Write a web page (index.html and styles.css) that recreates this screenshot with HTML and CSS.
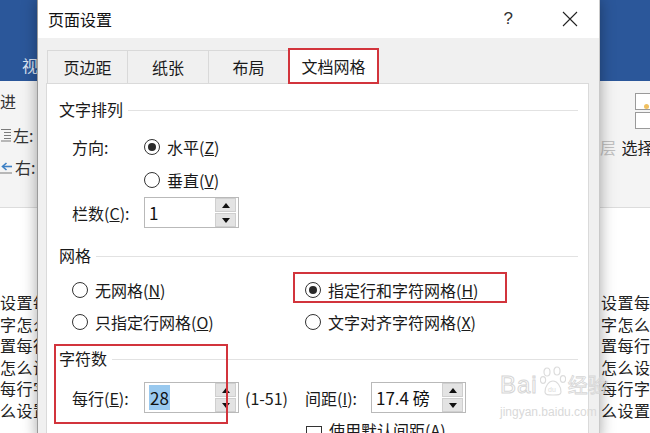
FILE: index.html
```html
<!DOCTYPE html>
<html lang="zh-CN">
<head>
<meta charset="utf-8">
<title>页面设置</title>
<link rel="stylesheet" href="styles.css">
</head>
<body>
<div class="app">
  <div class="app-tabs">
    <span class="app-tab">视图</span>
  </div>
  <div class="app-ribbon">
    <div class="rib-left">
      <div class="rib-row r1"><span class="indent-title">缩进</span></div>
      <div class="rib-row r2">
        <svg class="rib-icon" width="11" height="14" viewBox="0 0 11 14"><path d="M1 1.5h10M4 4.5h7M4 7.5h7M4 10.5h7M1 13h10" stroke="#7a7a7a" stroke-width="1"/></svg>
        <span>左:</span>
      </div>
      <div class="rib-row r3">
        <svg class="rib-icon" width="13" height="14" viewBox="0 0 13 14"><path d="M0 13h12" stroke="#7a7a7a" stroke-width="1"/><path d="M3 6.5h9" stroke="#3c7fc4" stroke-width="1.6"/><path d="M6.5 3L2.5 6.5 6.5 10" fill="none" stroke="#3c7fc4" stroke-width="1.6"/></svg>
        <span>右:</span>
      </div>
    </div>
    <div class="rib-right">
      <div class="rbox rbox1"><span class="rdot"></span></div>
      <div class="rbox rbox2"></div>
      <div class="rib-text"><span class="faded">层</span> 选择</div>
    </div>
  </div>
  <div class="doc">
    <div class="doc-col doc-left">
      <div>设置每行字</div>
      <div>字怎么设置</div>
      <div>置每行字数</div>
      <div>怎么设置每</div>
      <div>每行字数怎</div>
      <div>么设置每行</div>
    </div>
    <div class="doc-col doc-right">
      <div>设置每行</div>
      <div>字怎么设</div>
      <div>置每行字</div>
      <div>怎么设置</div>
      <div>每行字数</div>
      <div>么设置每</div>
    </div>
  </div>
</div>

<div class="dialog">
  <div class="dlg-title">
    <span class="dlg-name">页面设置</span>
    <span class="dlg-help">?</span>
    <svg class="dlg-close" width="16" height="16" viewBox="0 0 16 16"><path d="M1 1L15 15M15 1L1 15" stroke="#222" stroke-width="1.1"/></svg>
  </div>
  <div class="dlg-tabs">
    <div class="dtab">页边距</div>
    <div class="dtab wide">纸张</div>
    <div class="dtab">布局</div>
    <div class="dtab active">文档网格</div>
  </div>
  <div class="panel">
    <div class="group-head h1"><span>文字排列</span><i class="rule"></i></div>
    <div class="frow row-dir">
      <span class="flabel">方向:</span>
      <span class="radio on"></span><span class="rtext">水平(<u>Z</u>)</span>
    </div>
    <div class="frow row-vert">
      <span class="radio"></span><span class="rtext">垂直(<u>V</u>)</span>
    </div>
    <div class="frow row-cols">
      <span class="flabel">栏数(<u>C</u>):</span>
      <div class="spin"><span class="val">1</span><span class="btns"><span class="btn"><i class="up"></i></span><span class="btn"><i class="down"></i></span></span></div>
    </div>

    <div class="group-head h2"><span>网格</span><i class="rule"></i></div>
    <div class="grid-rows">
      <div class="gcell"><span class="radio"></span><span class="rtext">无网格(<u>N</u>)</span></div>
      <div class="gcell"><span class="radio on"></span><span class="rtext">指定行和字符网格(<u>H</u>)</span></div>
      <div class="gcell"><span class="radio"></span><span class="rtext">只指定行网格(<u>O</u>)</span></div>
      <div class="gcell"><span class="radio"></span><span class="rtext">文字对齐字符网格(<u>X</u>)</span></div>
    </div>

    <div class="group-head h3"><span>字符数</span><i class="rule"></i></div>
    <div class="frow row-chars">
      <span class="flabel">每行(<u>E</u>):</span>
      <div class="spin"><span class="val"><span class="sel">28</span></span><span class="btns"><span class="btn"><i class="up"></i></span><span class="btn"><i class="down"></i></span></span></div>
      <span class="range">(1-51)</span>
      <span class="flabel small">间距(<u>I</u>):</span>
      <div class="spin"><span class="val">17.4 磅</span><span class="btns"><span class="btn"><i class="up"></i></span><span class="btn"><i class="down"></i></span></span></div>
    </div>
    <div class="frow row-check">
      <span class="check"></span><span class="rtext">使用默认间距(<u>A</u>)</span>
    </div>

    <div class="mark mark-grid"></div>
    <div class="mark mark-chars"></div>
  </div>
</div>

<div class="watermark">
  <div class="wm-top">
    <span class="wm-bai">Bai</span>
    <svg class="wm-paw" width="26" height="30" viewBox="0 0 26 30"><g fill="none" stroke="#dcdcdc" stroke-width="1.2"><ellipse cx="7" cy="6" rx="3" ry="4"/><ellipse cx="17" cy="5" rx="3" ry="4"/><ellipse cx="3" cy="14" rx="2.6" ry="3.4"/><ellipse cx="23" cy="13" rx="2.6" ry="3.4"/><path d="M5 26c0-6 4-11 8-11s8 5 8 11c0 3-3 3-8 3s-8 0-8-3z"/></g><text x="8" y="26" font-size="7" fill="#dcdcdc" font-family="Liberation Sans, sans-serif">du</text></svg>
    <span class="wm-jy">经验</span>
  </div>
  <div class="wm-url">jingyan.baidu.com</div>
</div>
</body>
</html>
```

FILE: styles.css
```css
html, body {
  margin: 0;
  padding: 0;
}
body {
  width: 650px;
  height: 433px;
  overflow: hidden;
  position: relative;
  background: #ffffff;
  font-family: "Noto Sans CJK SC", "Liberation Sans", sans-serif;
  color: #1a1a1a;
}

/* ---------- background Word window ---------- */
.app {
  display: flex;
  flex-direction: column;
  height: 433px;
}
.app-tabs {
  height: 81px;
  background: #2b579a;
  display: flex;
  flex-shrink: 0;
}
.app-tab {
  margin-top: 55px;
  margin-left: 22px;
  font-size: 16px;
  line-height: 20px;
  color: #dbe4f2;
}
.app-ribbon {
  height: 126px;
  flex-shrink: 0;
  background: #f4f4f4;
  border-bottom: 1px solid #dcdcdc;
  display: flex;
  justify-content: space-between;
}
.rib-left {
  width: 60px;
  overflow: hidden;
  font-size: 16px;
  line-height: 20px;
}
.rib-row {
  display: flex;
  align-items: center;
  height: 20px;
  white-space: nowrap;
  color: #333;
}
.r1 { margin-top: 10px; }
.r2 { margin-top: 14px; }
.r3 { margin-top: 12px; }
.indent-title { margin-left: -16px; }
.rib-icon { margin-right: 2px; flex-shrink: 0; }

.rib-right {
  width: 50px;
  display: flex;
  flex-direction: column;
  overflow: hidden;
}
.rbox {
  margin-left: 35px;
  width: 20px;
  height: 17px;
  border: 1px solid #9a9a9a;
  background: #ffffff;
  box-sizing: border-box;
  position: relative;
}
.rbox1 { margin-top: 12px; }
.rbox2 { margin-top: 2px; }
.rdot {
  position: absolute;
  left: 8px;
  top: 10px;
  width: 5px;
  height: 5px;
  border-radius: 50%;
  background: #f0c060;
}
.rib-text {
  margin-top: 8px;
  font-size: 16px;
  line-height: 20px;
  white-space: nowrap;
  color: #222;
}
.faded { color: #c0c0c0; margin-right: 2px; }

.doc {
  flex: 1;
  display: flex;
  justify-content: space-between;
  padding-top: 84px;
  background: #ffffff;
}
.doc-col {
  font-size: 16px;
  line-height: 21.5px;
  color: #222;
  white-space: nowrap;
  overflow: hidden;
  letter-spacing: 0.5px;
}
.doc-left { width: 80px; }
.doc-right { width: 49px; }

/* ---------- dialog ---------- */
.dialog {
  position: absolute;
  left: 37px;
  top: 0;
  width: 563px;
  height: 440px;
  box-sizing: border-box;
  background: #f0f0f0;
  border-left: 1px solid #9b9b9b;
  border-right: 1px solid #c9c9c9;
  box-shadow: 0 0 14px rgba(0, 0, 0, 0.35);
  display: flex;
  flex-direction: column;
}
.dlg-title {
  height: 38px;
  flex-shrink: 0;
  background: #ffffff;
  display: flex;
  align-items: center;
  padding-left: 10px;
  font-size: 16px;
}
.dlg-name { flex: 1; color: #111; }
.dlg-help {
  font-family: "Liberation Sans", sans-serif;
  font-size: 17px;
  color: #333;
  margin-right: 49px;
}
.dlg-close { margin-right: 21px; }

.dlg-tabs {
  height: 45px;
  flex-shrink: 0;
  display: flex;
  align-items: flex-end;
  padding-left: 9px;
  position: relative;
  z-index: 2;
}
.dtab {
  height: 33px;
  min-width: 81px;
  padding: 0 13px;
  box-sizing: border-box;
  border: 1px solid #d9d9d9;
  border-bottom: none;
  margin-right: -1px;
  background: #f0f0f0;
  display: flex;
  align-items: center;
  justify-content: center;
  font-size: 16px;
  color: #1a1a1a;
}
.dtab.wide { min-width: 82px; }
.dtab.active {
  height: 36px;
  margin-bottom: -1px;
  background: #ffffff;
  border: 2px solid #d2343c;
  padding: 0 11.5px;
}

.panel {
  flex: 1;
  margin-left: 8px;
  width: 543px;
  box-sizing: border-box;
  background: #ffffff;
  border: 1px solid #dadada;
  position: relative;
  font-size: 16px;
}
.group-head {
  display: flex;
  align-items: center;
  height: 20px;
  padding-left: 12px;
  margin-right: 10px;
  color: #1a1a1a;
}
.rule {
  flex: 1;
  height: 1px;
  background: #e2e2e2;
  margin-left: 5px;
  margin-top: 3px;
}
.h1 { margin-top: 15px; }
.h2 { margin-top: 17px; }
.h3 { margin-top: 12px; }

.frow {
  display: flex;
  align-items: center;
  padding-left: 25px;
}
.flabel {
  width: 72px;
  flex-shrink: 0;
}
.flabel.small { width: 66px; }
.row-dir { height: 30px; margin-top: 13px; }
.row-vert { height: 30px; margin-top: 3px; padding-left: 97px; }
.row-cols { height: 31px; margin-top: 2px; }
.row-chars { height: 31px; margin-top: 14px; }
.row-check { height: 24px; margin-top: 5px; padding-left: 259px; align-items: flex-end; }

.radio {
  width: 16px;
  height: 16px;
  box-sizing: border-box;
  border: 1px solid #333;
  border-radius: 50%;
  display: flex;
  align-items: center;
  justify-content: center;
  flex-shrink: 0;
}
.radio.on::after {
  content: "";
  width: 8px;
  height: 8px;
  border-radius: 50%;
  background: #2a2a2a;
}
.rtext { margin-left: 7px; white-space: nowrap; }
.check {
  width: 16px;
  height: 16px;
  box-sizing: border-box;
  border: 1px solid #333;
  flex-shrink: 0;
}

.grid-rows {
  display: grid;
  grid-template-columns: 233px 1fr;
  grid-auto-rows: 28px;
  row-gap: 4px;
  padding-left: 25px;
  margin-top: 11px;
}
.gcell {
  display: flex;
  align-items: center;
}

.spin {
  width: 95px;
  height: 31px;
  box-sizing: border-box;
  border: 1px solid #b9b9b9;
  background: #ffffff;
  display: flex;
  align-items: center;
  justify-content: space-between;
  padding-left: 4px;
  padding-right: 2px;
  flex-shrink: 0;
}
.val {
  font-size: 17px;
  color: #111;
  white-space: nowrap;
}
.sel {
  background: #99c9ef;
  padding: 0 1px;
}
.btns {
  width: 21px;
  display: flex;
  flex-direction: column;
  gap: 1px;
}
.btn {
  height: 12px;
  background: #e3e3e3;
  border: 1px solid #cfcfcf;
  display: flex;
  align-items: center;
  justify-content: center;
}
.up {
  width: 0;
  height: 0;
  border-left: 4px solid transparent;
  border-right: 4px solid transparent;
  border-bottom: 5px solid #111;
}
.down {
  width: 0;
  height: 0;
  border-left: 4px solid transparent;
  border-right: 4px solid transparent;
  border-top: 5px solid #111;
}
.range {
  margin-left: 6px;
  width: 60px;
  flex-shrink: 0;
  white-space: nowrap;
}

.mark {
  position: absolute;
  border: 2px solid #d2343c;
  box-sizing: border-box;
  pointer-events: none;
}
.mark-grid { left: 246px; top: 188px; width: 214px; height: 31px; }
.mark-chars { left: 7px; top: 260px; width: 174px; height: 80px; }

/* ---------- watermark ---------- */
.watermark {
  position: absolute;
  left: 500px;
  top: 362px;
  width: 110px;
  pointer-events: none;
}
.wm-top {
  display: flex;
  align-items: flex-end;
  height: 36px;
}
.wm-bai {
  font-family: "Liberation Sans", sans-serif;
  font-size: 24px;
  line-height: 26px;
  color: rgba(255, 255, 255, 0.2);
  -webkit-text-stroke: 1px #d6d6d6;
  letter-spacing: 1px;
}
.wm-paw { margin-left: 2px; margin-bottom: 2px; }
.wm-jy {
  font-size: 20px;
  line-height: 26px;
  color: rgba(255, 255, 255, 0.2);
  -webkit-text-stroke: 0.8px #d6d6d6;
  margin-left: 2px;
}
.wm-url {
  font-family: "Liberation Sans", sans-serif;
  font-size: 12px;
  line-height: 16px;
  color: #d9d9d9;
  margin-top: 6px;
}
```
